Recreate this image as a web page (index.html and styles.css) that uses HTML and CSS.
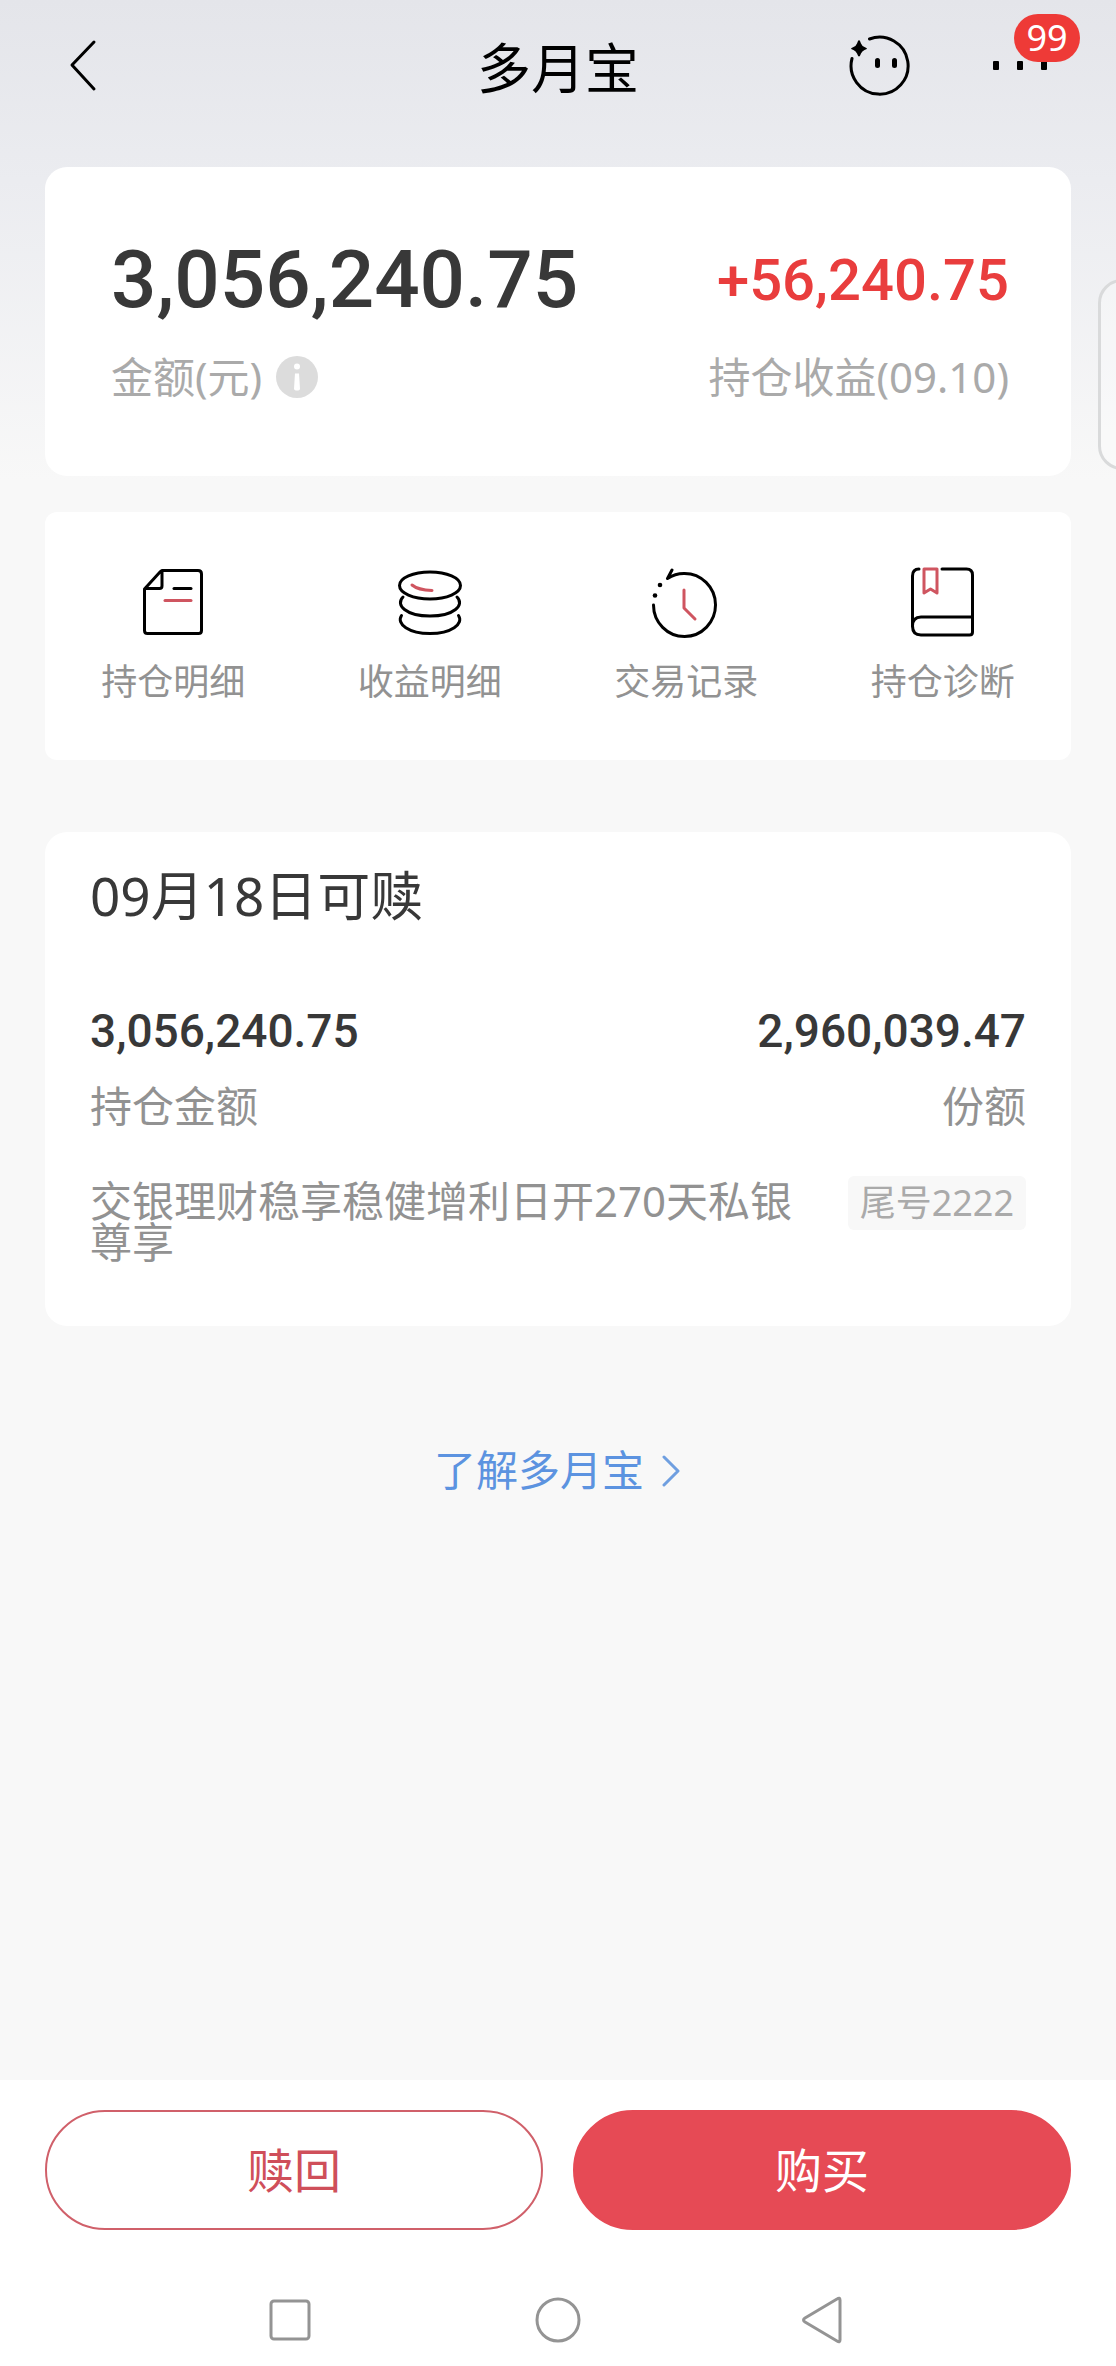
FILE: index.html
```html
<!DOCTYPE html>
<html lang="zh-CN">
<head>
<meta charset="utf-8">
<meta name="viewport" content="width=device-width, initial-scale=1">
<title>多月宝</title>
<link rel="stylesheet" href="styles.css">
</head>
<body>
<header class="header">
  <button class="icon-button back" type="button" aria-label="返回">
    <svg width="30" height="54" viewBox="0 0 30 54" fill="none" stroke="#000" stroke-width="3" stroke-linecap="round" stroke-linejoin="round"><path d="M25 3 3 26 25 50"/></svg>
  </button>
  <h1 class="header-title">多月宝</h1>
  <div class="header-tools">
    <button class="icon-button" type="button" aria-label="智能助手">
      <svg width="64" height="64" viewBox="0 0 64 64" fill="none">
        <path d="M21.5 5A28.5 28.5 0 1 1 4 24.5" stroke="#000" stroke-width="3" stroke-linecap="round"/>
        <path d="M11 6Q12 6 13 9.500Q14 12 16.500 13Q19 14 19 14.500Q19 15 16.500 16Q14 17 13 19.500Q12 22.500 11 22.500Q10 22.500 9 19.500Q8 17 5.500 16Q3 15 3 14.500Q3 14 5.500 13Q8 12 9 9.500Q10 6 11 6Z" fill="#000"/>
        <rect x="27" y="24" width="5" height="10" rx="2.500" fill="#000"/>
        <rect x="44" y="24" width="5" height="10" rx="2.500" fill="#000"/>
      </svg>
    </button>
    <button class="icon-button more" type="button" aria-label="更多,99条消息">
      <svg width="54" height="10" viewBox="0 0 54 10" fill="#000"><rect width="6" height="9" rx="1"/><rect x="24" width="6" height="9" rx="1"/><rect x="48" width="6" height="9" rx="1"/></svg>
      <span class="badge">99</span>
    </button>
  </div>
</header>

<main class="main">
  <section class="card summary">
    <div class="summary-item">
      <strong class="amount">3,056,240.75</strong>
      <span class="summary-label">金额(元)
        <button class="icon-button" type="button" aria-label="金额说明">
          <svg width="42" height="42" viewBox="0 0 42 42"><circle cx="21" cy="21" r="21" fill="#dcdcdc"/><circle cx="21" cy="10.500" r="3" fill="#fff"/><path d="M19 17.500h4l1 15q0 2-3 2t-3-2z" fill="#fff"/></svg>
        </button>
      </span>
    </div>
    <div class="summary-item summary-gain">
      <strong class="gain">+56,240.75</strong>
      <span class="summary-label">持仓收益(09.10)</span>
    </div>
  </section>

  <nav class="card actions" aria-label="功能">
    <a class="action" href="#holdings">
      <svg width="72" height="72" viewBox="0 0 72 72" fill="none" stroke="#000" stroke-width="3" stroke-linecap="round" stroke-linejoin="round">
        <path d="M25 4.500H61Q64.500 4.500 64.500 8V64.500Q64.500 67.500 61.500 67.500H10.500Q7.500 67.500 7.500 64.500V23L23 6Q25 4.500 25 4.500V20Q25 22.500 22.500 22.500H8"/>
        <path d="M37 22.500H54"/><path d="M28 34.500H54" stroke="#cf5560"/>
      </svg>
      持仓明细
    </a>
    <a class="action" href="#income">
      <svg width="72" height="72" viewBox="0 0 72 72" fill="none" stroke="#000" stroke-width="3" stroke-linecap="round">
        <ellipse cx="36" cy="19.500" rx="30.500" ry="13.500"/>
        <path d="M9 31C1 39 12 50 36 50S71 39 63 31"/>
        <path d="M7.500 49.500C2 58 15 67.500 36 67.500S70 58 64.500 49.500"/>
        <path d="M18 19Q24 24 38 24.500" stroke="#cf5560"/>
      </svg>
      收益明细
    </a>
    <a class="action" href="#records">
      <svg width="72" height="72" viewBox="0 0 72 72" fill="none" stroke="#000" stroke-width="3" stroke-linecap="round" stroke-linejoin="round">
        <path d="M22 4 17.500 12.500Q25 7.500 34 7.500A31 31.500 0 1 1 3.500 39"/>
        <path d="M34 24V42L45 53" stroke="#cf5560"/>
        <circle cx="10" cy="19" r="2.300" fill="#000" stroke="none"/><circle cx="5" cy="29.500" r="2.300" fill="#000" stroke="none"/>
      </svg>
      交易记录
    </a>
    <a class="action" href="#diagnosis">
      <svg width="72" height="72" viewBox="0 0 72 72" fill="none" stroke="#000" stroke-width="3" stroke-linecap="round" stroke-linejoin="round">
        <path d="M12 3Q5.500 3 5.500 10V60Q5.500 69 14 69H62.500Q65.500 69 65.500 66V9Q65.500 3 59.500 3H35"/>
        <path d="M5.500 60Q5.500 51 14 51H65"/>
        <path d="M17 3H30V27L23.500 23 17 27Z" stroke="#cf5560"/>
      </svg>
      持仓诊断
    </a>
  </nav>

  <section class="card holding">
    <h2 class="holding-title">09月18日可赎</h2>
    <dl class="figures">
      <div class="figure"><dt>持仓金额</dt><dd>3,056,240.75</dd></div>
      <div class="figure figure-end"><dt>份额</dt><dd>2,960,039.47</dd></div>
    </dl>
    <div class="product">
      <p class="product-name">交银理财稳享稳健增利日开270天私银尊享</p>
      <span class="tag">尾号2222</span>
    </div>
  </section>

  <a class="learn" href="#about">了解多月宝
    <svg width="20" height="34" viewBox="0 0 20 34" fill="none" stroke="#6f9fe0" stroke-width="3" stroke-linecap="round" stroke-linejoin="round"><path d="M2 4 16 18 2 32"/></svg>
  </a>
</main>

<aside class="side-tab" aria-label="侧边栏"></aside>

<footer class="footer">
  <div class="footer-buttons">
    <button class="button" type="button">赎回</button>
    <button class="button button-primary" type="button">购买</button>
  </div>
  <div class="system-nav">
    <button class="icon-button" type="button" aria-label="最近任务"><svg width="48" height="48" viewBox="0 0 48 48" fill="none" stroke="#949494" stroke-width="3"><rect x="4" y="5" width="38" height="38" rx="3"/></svg></button>
    <button class="icon-button" type="button" aria-label="主屏幕"><svg width="48" height="48" viewBox="0 0 48 48" fill="none" stroke="#949494" stroke-width="3"><circle cx="24" cy="24" r="21"/></svg></button>
    <button class="icon-button" type="button" aria-label="系统返回"><svg width="48" height="48" viewBox="0 0 48 48" fill="none" stroke="#949494" stroke-width="3" stroke-linejoin="round"><path d="M36 3Q39 1 39 4V44Q39 47 36 45L4 26Q1 24 4 22Z"/></svg></button>
  </div>
</footer>
</body>
</html>
```

FILE: styles.css
```css
* {
  box-sizing: border-box;
}

body {
  position: relative;
  display: flex;
  flex-direction: column;
  min-height: 100vh;
  margin: 0;
  overflow-x: hidden;
  background: #f8f8f8 linear-gradient(#e4e5ea 0, #ebecf0 180px, #f8f8f8 480px) no-repeat;
  color: #383838;
  font-family: "Noto Sans", "Noto Sans CJK SC", sans-serif;
  font-size: 42px;
}

h1, h2, p, dl, dd {
  margin: 0;
  font-weight: 400;
}

a {
  color: inherit;
  text-decoration: none;
}

svg {
  display: block;
  flex: none;
}

.icon-button {
  padding: 0;
  border: 0;
  background: none;
  font: inherit;
}

.header {
  display: grid;
  grid-template-columns: 1fr auto 1fr;
  align-items: center;
  height: 131px;
  padding: 0 69px;
}

.back {
  justify-self: start;
}

.header-title {
  padding-top: 4px;
  color: #000;
  font-size: 54px;
  line-height: 64px;
}

.header-tools {
  display: flex;
  align-items: center;
  justify-content: flex-end;
  gap: 81px;
}

.more {
  position: relative;
}

.badge {
  position: absolute;
  right: -33px;
  bottom: 9px;
  width: 66px;
  border-radius: 24px;
  background: #ee3a37;
  color: #fff;
  font-size: 36px;
  line-height: 48px;
  text-align: center;
}

.main {
  display: flex;
  flex: 1;
  flex-direction: column;
  padding: 36px 45px;
}

.card {
  border-radius: 22px;
  background: #fff;
}

.summary {
  display: flex;
  justify-content: space-between;
  padding: 71px 62px 75px 66px;
}

.summary-item {
  display: flex;
  flex-direction: column;
  gap: 31px;
}

.summary-gain {
  align-items: flex-end;
}

.amount,
.gain {
  font-family: Roboto, sans-serif;
  font-weight: 500;
  line-height: 84px;
}

.amount {
  font-size: 80px;
}

.gain {
  color: #e93d3d;
  font-size: 58px;
}

.summary-label {
  display: flex;
  align-items: center;
  gap: 14px;
  color: #aaa;
  line-height: 48px;
}

.actions {
  display: grid;
  grid-template-columns: repeat(4, 1fr);
  margin-top: 36px;
  padding: 54px 0 56px;
  border-radius: 12px;
}

.action {
  display: flex;
  flex-direction: column;
  align-items: center;
  gap: 22px;
  color: #929292;
  font-size: 36px;
  line-height: 44px;
}

.holding {
  margin-top: 72px;
  padding: 32px 45px 64px;
}

.holding-title {
  font-size: 53px;
  line-height: 64px;
}

.figures {
  display: flex;
  justify-content: space-between;
  margin-top: 75px;
}

.figure {
  display: flex;
  flex-direction: column-reverse;
  gap: 25px;
}

.figure-end {
  text-align: right;
}

.figure dt {
  color: #929292;
  line-height: 44px;
}

.figure dd {
  font-family: Roboto, sans-serif;
  font-size: 46px;
  font-weight: 500;
  line-height: 56px;
}

.product {
  display: flex;
  align-items: flex-start;
  justify-content: space-between;
  gap: 36px;
  margin-top: 48px;
}

.product-name {
  padding-top: 4px;
  color: #929292;
  line-height: 41px;
}

.tag {
  flex: none;
  padding: 0 12px;
  border-radius: 6px;
  background: #f8f8f8;
  color: #aaa;
  font-size: 36px;
  line-height: 54px;
}

.learn {
  display: flex;
  align-items: center;
  align-self: center;
  gap: 18px;
  margin-top: 120px;
  color: #5c93e0;
  line-height: 48px;
}

/* Drawer handle, half hidden past the right edge */
.side-tab {
  position: absolute;
  top: 279px;
  right: -30px;
  width: 48px;
  height: 191px;
  border: 3px solid #d9dadb;
  border-radius: 28px;
  background: rgba(255, 255, 255, 0.3);
}

.footer {
  padding: 30px 45px 0;
  background: #fff;
}

.footer-buttons {
  display: grid;
  grid-template-columns: 1fr 1fr;
  gap: 30px;
}

.button {
  height: 120px;
  padding: 0 0 6px;
  border: 2px solid #d0606a;
  border-radius: 60px;
  background: #fff;
  color: #cf4f5a;
  font: inherit;
  font-size: 47px;
}

.button-primary {
  border-color: #e64a55;
  background: #e64a55;
  color: #fff;
}

.system-nav {
  display: grid;
  grid-template-columns: repeat(3, 1fr);
  justify-items: center;
  padding: 66px 113px 22px;
}
```
